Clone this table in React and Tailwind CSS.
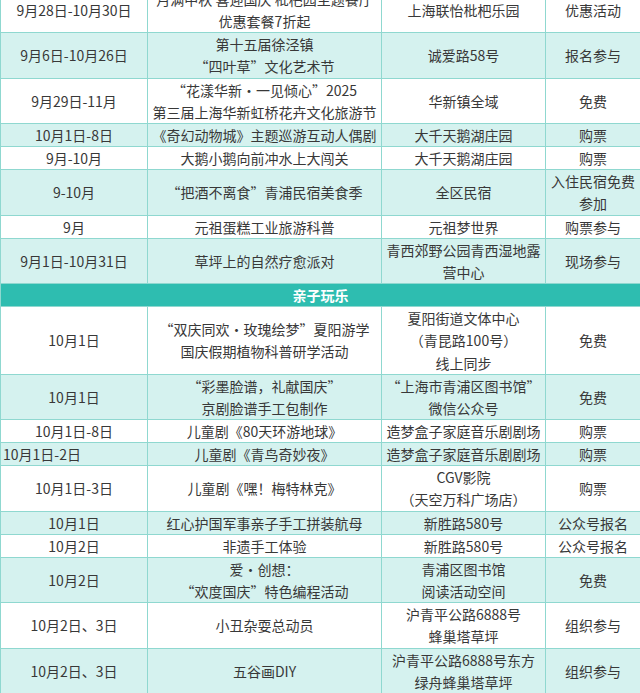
import React from 'react';

const rowsA = [
  ['9月28日-10月30日', ['月满中秋 喜迎国庆 枇杷园主题餐厅', '优惠套餐7折起'], ['上海联怡枇杷乐园'], ['优惠活动']],
  ['9月6日-10月26日', ['第十五届徐泾镇', '“四叶草”文化艺术节'], ['诚爱路58号'], ['报名参与']],
  ['9月29日-11月', ['“花漾华新·一见倾心”2025', '第三届上海华新虹桥花卉文化旅游节'], ['华新镇全域'], ['免费']],
  ['10月1日-8日', ['《奇幻动物城》主题巡游互动人偶剧'], ['大千天鹅湖庄园'], ['购票']],
  ['9月-10月', ['大鹅小鹅向前冲水上大闯关'], ['大千天鹅湖庄园'], ['购票']],
  ['9-10月', ['“把酒不离食”青浦民宿美食季'], ['全区民宿'], ['入住民宿免费', '参加']],
  ['9月', ['元祖蛋糕工业旅游科普'], ['元祖梦世界'], ['购票参与']],
  ['9月1日-10月31日', ['草坪上的自然疗愈派对'], ['青西郊野公园青西湿地露', '营中心'], ['现场参与']],
];

const rowsB = [
  ['10月1日', ['“双庆同欢·玫瑰绘梦”夏阳游学', '国庆假期植物科普研学活动'], ['夏阳街道文体中心', '（青昆路100号）', '线上同步'], ['免费']],
  ['10月1日', ['“彩墨脸谱，礼献国庆”', '京剧脸谱手工包制作'], ['“上海市青浦区图书馆”', '微信公众号'], ['免费']],
  ['10月1日-8日', ['儿童剧《80天环游地球》'], ['造梦盒子家庭音乐剧剧场'], ['购票']],
  ['10月1日-2日', ['儿童剧《青鸟奇妙夜》'], ['造梦盒子家庭音乐剧剧场'], ['购票'], true],
  ['10月1日-3日', ['儿童剧《嘿！梅特林克》'], ['CGV影院', '（天空万科广场店）'], ['购票']],
  ['10月1日', ['红心护国军事亲子手工拼装航母'], ['新胜路580号'], ['公众号报名']],
  ['10月2日', ['非遗手工体验'], ['新胜路580号'], ['公众号报名']],
  ['10月2日', ['爱·创想：', '“欢度国庆”特色编程活动'], ['青浦区图书馆', '阅读活动空间'], ['免费']],
  ['10月2日、3日', ['小丑杂耍总动员'], ['沪青平公路6888号', '蜂巢塔草坪'], ['组织参与']],
  ['10月2日、3日', ['五谷画DIY'], ['沪青平公路6888号东方', '绿舟蜂巢塔草坪'], ['组织参与']],
];

const Lines = ({ lines }) =>
  lines.map((l, i) => (
    <React.Fragment key={i}>
      {i > 0 && <br />}
      {l}
    </React.Fragment>
  ));

const Row = ({ r, shaded }) => {
  const [date, name, place, how, leftDate] = r;
  const bg = shaded ? 'bg-[#d5f2ef]' : 'bg-white';
  return (
    <tr className={bg}>
      <td className={`border border-[#8fd8d0] px-0.5 ${leftDate ? 'text-left' : 'text-center'}`}>{date}</td>
      <td className="border border-[#8fd8d0] px-0.5 text-center whitespace-nowrap"><Lines lines={name} /></td>
      <td className="border border-[#8fd8d0] px-0.5 text-center whitespace-nowrap"><Lines lines={place} /></td>
      <td className="border border-[#8fd8d0] px-0.5 text-center whitespace-nowrap"><Lines lines={how} /></td>
    </tr>
  );
};

export default function App() {
  return (
    <div className="w-[640px] h-[693px] overflow-hidden bg-white">
      <table
        className="-mt-[13px] w-[640px] table-fixed border-collapse text-[14px] leading-[22.15px] text-[#383838]"
        style={{ fontFamily: '"Noto Sans CJK SC", "Noto Sans", sans-serif' }}
      >
        <colgroup>
          <col className="w-[147px]" />
          <col className="w-[234px]" />
          <col className="w-[164px]" />
          <col className="w-[95px]" />
        </colgroup>
        <tbody>
          {rowsA.map((r, i) => (
            <Row key={'a' + i} r={r} shaded={i % 2 === 1} />
          ))}
          <tr className="bg-[#2ebdb0]">
            <td colSpan={4} className="border border-[#8fd8d0] text-center font-bold text-white">
              亲子玩乐
            </td>
          </tr>
          {rowsB.map((r, i) => (
            <Row key={'b' + i} r={r} shaded={i % 2 === 1} />
          ))}
        </tbody>
      </table>
    </div>
  );
}
